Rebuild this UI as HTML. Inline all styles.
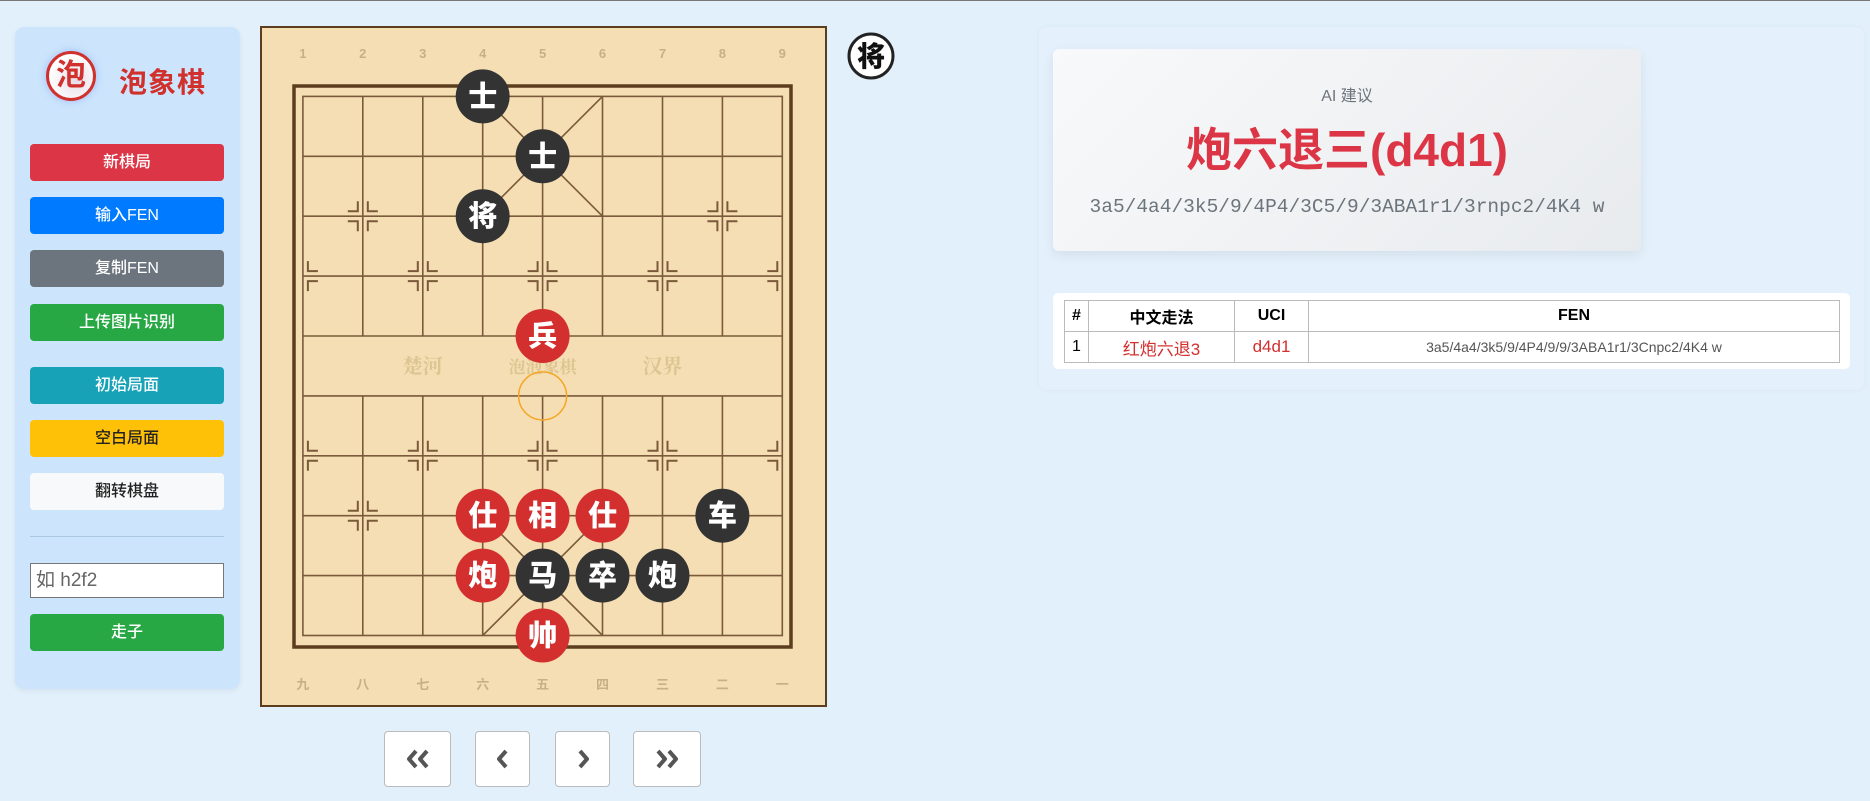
<!DOCTYPE html>
<html><head><meta charset="utf-8"><style>
*{box-sizing:border-box;margin:0;padding:0}
body{width:1870px;height:800px;background:#e2f0fc;font-family:"Liberation Sans","Noto Sans CJK SC",sans-serif;position:relative;overflow:hidden;border-top:1px solid #777}
.side{position:absolute;left:15px;top:26px;width:225px;height:662px;background:#cce5fc;border-radius:9px;box-shadow:0 2px 6px rgba(0,0,0,.06)}
.logo{position:absolute;left:46px;top:50px;width:50px;height:50px;border-radius:50%;border:3px solid #d0312d;background:radial-gradient(circle at 60% 60%,#e6dde8,#fff 70%);color:#d0312d;font-weight:bold;font-size:30px;line-height:44px;text-align:center;box-shadow:0 0 8px rgba(120,150,255,.5)}
.ttl{position:absolute;left:119px;top:60px;font-size:28px;font-weight:bold;color:#d0312d;letter-spacing:1px}
.btn{position:absolute;left:30px;width:194px;height:37px;border-radius:4px;color:#fff;font-size:16px;font-weight:500;text-align:center;line-height:37px}
.nav{position:absolute;top:730px;height:56px;background:#fff;border:1px solid #bbb;border-radius:4px}
.nav svg{position:absolute;left:50%;top:50%;transform:translate(-50%,-50%)}
.panel{position:absolute;left:1039px;top:26px;width:825px;height:363px;background:#e4f1fc;border-radius:8px;box-shadow:0 0 6px rgba(0,0,0,.04)}
.ai{position:absolute;left:1053px;top:48px;width:588px;height:202px;border-radius:6px;background:linear-gradient(135deg,#f8f9fa,#e8ebee);box-shadow:0 4px 12px rgba(0,0,0,.08);text-align:center}
table{position:absolute;left:1064px;top:299px;width:776px;border-collapse:collapse;font-size:16px}
td,th{border:1px solid #bbb;text-align:center;height:31px}
</style></head><body>
<div class="side">
</div>
<div class="logo">泡</div>
<div class="ttl">泡象棋</div>
<div class="btn" style="top:143px;background:#dc3545">新棋局</div>
<div class="btn" style="top:196px;background:#007bff">输入FEN</div>
<div class="btn" style="top:249px;background:#6c757d">复制FEN</div>
<div class="btn" style="top:303px;background:#28a745">上传图片识别</div>
<div class="btn" style="top:366px;background:#17a2b8">初始局面</div>
<div class="btn" style="top:419px;background:#ffc107;color:#222">空白局面</div>
<div class="btn" style="top:472px;background:#f8f9fa;color:#222">翻转棋盘</div>
<div style="position:absolute;left:30px;top:535px;width:194px;height:1px;background:#aac8e0"></div>
<div style="position:absolute;left:30px;top:562px;width:194px;height:35px;background:#fff;border:1px solid #777;font-size:19px;color:#666;padding-left:5px;line-height:33px">如 h2f2</div>
<div class="btn" style="top:613px;background:#28a745">走子</div>

<svg style="position:absolute;left:0;top:0" width="1870" height="800">
<defs>
<g id="mk" fill="none" stroke="#7a5a3a" stroke-width="2"><path d="M-5,-15V-5H-15M5,-15V-5H15M-5,15V5H-15M5,15V5H15"/></g>
<g id="mkR" fill="none" stroke="#7a5a3a" stroke-width="2"><path d="M5,-15V-5H15M5,15V5H15"/></g>
<g id="mkL" fill="none" stroke="#7a5a3a" stroke-width="2"><path d="M-5,-15V-5H-15M-5,15V5H-15"/></g>
</defs>
<rect x="261" y="26" width="565" height="679" fill="#f5deb3" stroke="#5c3d1e" stroke-width="2"/>
<rect x="294" y="85" width="497" height="561" fill="none" stroke="#5c3d1e" stroke-width="3.5"/>
<g stroke="#7a5a3a" stroke-width="1.6" fill="none">
<rect x="302.9" y="95.4" width="479.4" height="539.1"/>
<path d="M302.9,155.3H782.3M302.9,215.2H782.3M302.9,275.1H782.3M302.9,335H782.3M302.9,394.9H782.3M302.9,454.8H782.3M302.9,514.7H782.3M302.9,574.6H782.3"/>
<path d="M362.8,95.4V335M422.8,95.4V335M482.7,95.4V335M542.6,95.4V335M602.5,95.4V335M662.5,95.4V335M722.4,95.4V335"/>
<path d="M362.8,394.9V634.5M422.8,394.9V634.5M482.7,394.9V634.5M542.6,394.9V634.5M602.5,394.9V634.5M662.5,394.9V634.5M722.4,394.9V634.5"/>
<path d="M482.7,95.4L602.5,215.2M602.5,95.4L482.7,215.2M482.7,514.7L602.5,634.5M602.5,514.7L482.7,634.5"/>
</g>
<use href="#mk" x="362.8" y="215.2"/><use href="#mk" x="722.4" y="215.2"/>
<use href="#mk" x="362.8" y="514.7"/><use href="#mk" x="722.4" y="514.7"/>
<use href="#mkR" x="302.9" y="275.1"/><use href="#mk" x="422.8" y="275.1"/><use href="#mk" x="542.6" y="275.1"/><use href="#mk" x="662.5" y="275.1"/><use href="#mkL" x="782.3" y="275.1"/>
<use href="#mkR" x="302.9" y="454.8"/><use href="#mk" x="422.8" y="454.8"/><use href="#mk" x="542.6" y="454.8"/><use href="#mk" x="662.5" y="454.8"/><use href="#mkL" x="782.3" y="454.8"/>
<g font-family="Liberation Sans,Noto Sans CJK SC,sans-serif" font-weight="bold" font-size="13" fill="#c7b083" text-anchor="middle">
<text x="302.9" y="57">1</text><text x="362.8" y="57">2</text><text x="422.8" y="57">3</text><text x="482.7" y="57">4</text><text x="542.6" y="57">5</text><text x="602.5" y="57">6</text><text x="662.5" y="57">7</text><text x="722.4" y="57">8</text><text x="782.3" y="57">9</text>
<text x="302.9" y="688">九</text><text x="362.8" y="688">八</text><text x="422.8" y="688">七</text><text x="482.7" y="688">六</text><text x="542.6" y="688">五</text><text x="602.5" y="688">四</text><text x="662.5" y="688">三</text><text x="722.4" y="688">二</text><text x="782.3" y="688">一</text>
</g>
<g font-family="Noto Serif CJK SC,serif" font-weight="bold" font-size="20" fill="#dcc591" text-anchor="middle">
<text x="422.8" y="372">楚河</text><text x="542.6" y="372" font-size="17">泡泡象棋</text><text x="662.5" y="372">汉界</text>
</g>
<circle cx="542.6" cy="394.9" r="24" fill="none" stroke="#f5a623" stroke-width="1.5"/>
<g font-family="Noto Sans CJK SC,sans-serif" font-weight="900" font-size="29" fill="#fff" text-anchor="middle">
<circle cx="482.7" cy="95.4" r="27" fill="#333"/><text x="482.7" y="105.4">士</text>
<circle cx="542.6" cy="155.3" r="27" fill="#333"/><text x="542.6" y="165.3">士</text>
<circle cx="482.7" cy="215.2" r="27" fill="#333"/><text x="482.7" y="225.2">将</text>
<circle cx="542.6" cy="335" r="27" fill="#d32f2f"/><text x="542.6" y="345">兵</text>
<circle cx="482.7" cy="514.7" r="27" fill="#d32f2f"/><text x="482.7" y="524.7">仕</text>
<circle cx="542.6" cy="514.7" r="27" fill="#d32f2f"/><text x="542.6" y="524.7">相</text>
<circle cx="602.5" cy="514.7" r="27" fill="#d32f2f"/><text x="602.5" y="524.7">仕</text>
<circle cx="722.4" cy="514.7" r="27" fill="#333"/><text x="722.4" y="524.7">车</text>
<circle cx="482.7" cy="574.6" r="27" fill="#d32f2f"/><text x="482.7" y="584.6">炮</text>
<circle cx="542.6" cy="574.6" r="27" fill="#333"/><text x="542.6" y="584.6">马</text>
<circle cx="602.5" cy="574.6" r="27" fill="#333"/><text x="602.5" y="584.6">卒</text>
<circle cx="662.5" cy="574.6" r="27" fill="#333"/><text x="662.5" y="584.6">炮</text>
<circle cx="542.6" cy="634.5" r="27" fill="#d32f2f"/><text x="542.6" y="644.5">帅</text>
</g>
<circle cx="871" cy="55" r="22" fill="#fff" stroke="#222" stroke-width="3"/>
<text x="871" y="65" font-family="Noto Sans CJK SC,sans-serif" font-weight="900" font-size="28" fill="#111" text-anchor="middle">将</text>
</svg>

<div class="nav" style="left:384px;width:67px"><svg width="26" height="20" viewBox="0 0 26 20" fill="none" stroke="#555" stroke-width="4" stroke-linejoin="round"><path d="M11,2L4,10L11,18M22,2L15,10L22,18"/></svg></div>
<div class="nav" style="left:475px;width:55px"><svg width="14" height="20" viewBox="0 0 14 20" fill="none" stroke="#555" stroke-width="4" stroke-linejoin="round"><path d="M10,2L3,10L10,18"/></svg></div>
<div class="nav" style="left:555px;width:55px"><svg width="14" height="20" viewBox="0 0 14 20" fill="none" stroke="#555" stroke-width="4" stroke-linejoin="round"><path d="M4,2L11,10L4,18"/></svg></div>
<div class="nav" style="left:633px;width:68px"><svg width="26" height="20" viewBox="0 0 26 20" fill="none" stroke="#555" stroke-width="4" stroke-linejoin="round"><path d="M4,2L11,10L4,18M15,2L22,10L15,18"/></svg></div>

<div class="panel"></div>
<div class="ai">
<div style="margin-top:33px;font-size:16px;color:#6c757d">AI 建议</div>
<div style="margin-top:14px;font-size:46px;font-weight:bold;color:#dc3545;line-height:60px">炮六退三(d4d1)</div>
<div style="margin-top:16px;font-family:'Liberation Mono',monospace;font-size:19.5px;color:#6c757d">3a5/4a4/3k5/9/4P4/3C5/9/3ABA1r1/3rnpc2/4K4 w</div>
</div>
<div style="position:absolute;left:1053px;top:292px;width:797px;height:76px;background:#fff;border-radius:5px"></div>
<table>
<tr><th style="width:24px">#</th><th style="width:146px">中文走法</th><th style="width:74px">UCI</th><th>FEN</th></tr>
<tr><td>1</td><td style="color:#d32f2f;font-size:17px">红炮六退3</td><td style="color:#d32f2f;font-size:17px">d4d1</td><td style="font-size:14px;color:#555">3a5/4a4/3k5/9/4P4/9/9/3ABA1r1/3Cnpc2/4K4 w</td></tr>
</table>
</body></html>
